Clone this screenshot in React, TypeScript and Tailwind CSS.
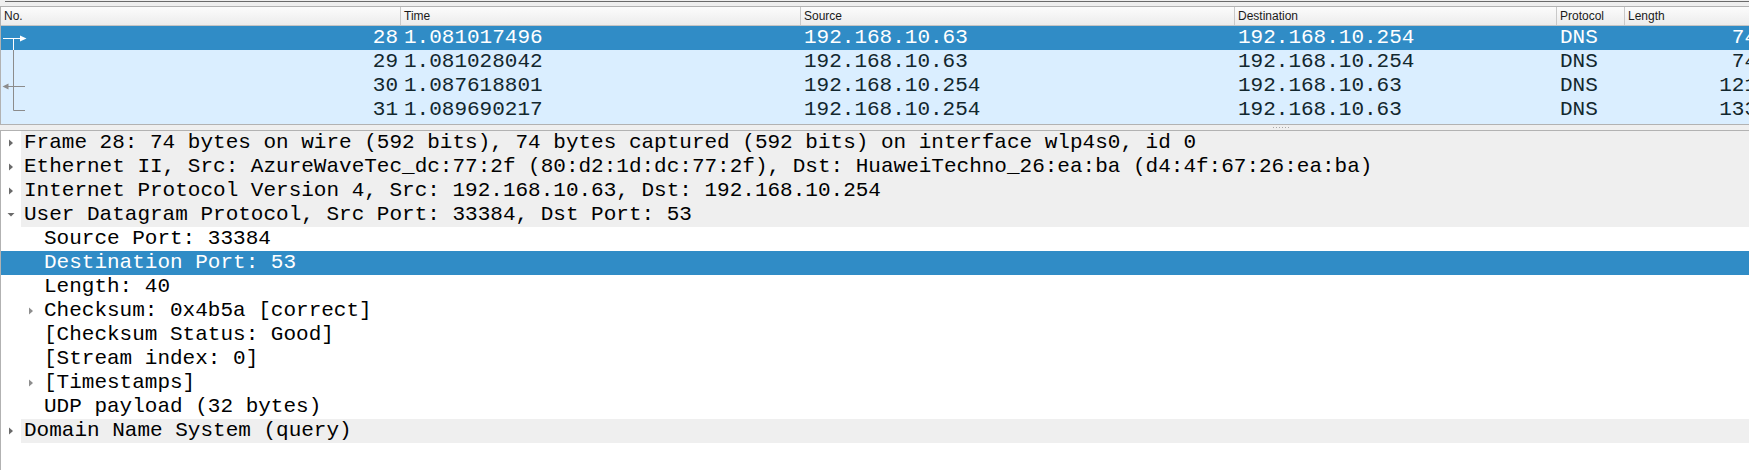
import React from "react";

const mono = { fontFamily: '"Liberation Mono", monospace' };

type Pkt = { no: string; time: string; src: string; dst: string; proto: string; len: string };

const packets: Pkt[] = [
  { no: "28", time: "1.081017496", src: "192.168.10.63", dst: "192.168.10.254", proto: "DNS", len: "74" },
  { no: "29", time: "1.081028042", src: "192.168.10.63", dst: "192.168.10.254", proto: "DNS", len: "74" },
  { no: "30", time: "1.087618801", src: "192.168.10.254", dst: "192.168.10.63", proto: "DNS", len: "121" },
  { no: "31", time: "1.089690217", src: "192.168.10.254", dst: "192.168.10.63", proto: "DNS", len: "133" },
];

function Related({ idx, selected }: { idx: number; selected: boolean }) {
  const c = selected ? "#ffffff" : "#8c8c8c";
  return (
    <svg width="30" height="24" className="absolute left-0 top-0" viewBox="0 0 30 24">
      {idx === 0 && (
        <>
          <line x1="2" y1="12.5" x2="20" y2="12.5" stroke={c} strokeWidth="1" />
          <polygon points="19,9.5 25.5,12.5 19,15.5" fill={c} />
          <line x1="12.5" y1="12.5" x2="12.5" y2="24" stroke={c} strokeWidth="1" />
        </>
      )}
      {idx === 1 && <line x1="12.5" y1="0" x2="12.5" y2="24" stroke={c} strokeWidth="1" />}
      {idx === 2 && (
        <>
          <line x1="12.5" y1="0" x2="12.5" y2="24" stroke={c} strokeWidth="1" />
          <line x1="7" y1="12.5" x2="24" y2="12.5" stroke={c} strokeWidth="1" />
          <polygon points="7.5,9.5 1.5,12.5 7.5,15.5" fill={c} />
        </>
      )}
      {idx === 3 && (
        <>
          <line x1="12.5" y1="0" x2="12.5" y2="12.5" stroke={c} strokeWidth="1" />
          <line x1="12.5" y1="12.5" x2="24" y2="12.5" stroke={c} strokeWidth="1" />
        </>
      )}
    </svg>
  );
}

function Arrow({ open, color }: { open?: boolean; color: string }) {
  return open ? (
    <svg width="8" height="6" viewBox="0 0 8 6">
      <polygon points="0.5,1 7.5,1 4,4.5" fill={color} />
    </svg>
  ) : (
    <svg width="6" height="8" viewBox="0 0 6 8">
      <polygon points="1,0.5 5,4 1,7.5" fill={color} />
    </svg>
  );
}

type Node = { text: string; level: 0 | 1; arrow?: "open" | "closed"; selected?: boolean };

const nodes: Node[] = [
  { text: "Frame 28: 74 bytes on wire (592 bits), 74 bytes captured (592 bits) on interface wlp4s0, id 0", level: 0, arrow: "closed" },
  { text: "Ethernet II, Src: AzureWaveTec_dc:77:2f (80:d2:1d:dc:77:2f), Dst: HuaweiTechno_26:ea:ba (d4:4f:67:26:ea:ba)", level: 0, arrow: "closed" },
  { text: "Internet Protocol Version 4, Src: 192.168.10.63, Dst: 192.168.10.254", level: 0, arrow: "closed" },
  { text: "User Datagram Protocol, Src Port: 33384, Dst Port: 53", level: 0, arrow: "open" },
  { text: "Source Port: 33384", level: 1 },
  { text: "Destination Port: 53", level: 1, selected: true },
  { text: "Length: 40", level: 1 },
  { text: "Checksum: 0x4b5a [correct]", level: 1, arrow: "closed" },
  { text: "[Checksum Status: Good]", level: 1 },
  { text: "[Stream index: 0]", level: 1 },
  { text: "[Timestamps]", level: 1, arrow: "closed" },
  { text: "UDP payload (32 bytes)", level: 1 },
  { text: "Domain Name System (query)", level: 0, arrow: "closed" },
];

export default function App() {
  const headerCell = "h-full flex items-center pl-[3px] border-r border-[#c9c9c9] shrink-0 overflow-hidden";
  return (
    <div
      className="w-[1749px] h-[470px] bg-[#efefef] overflow-hidden flex flex-col"
      style={{ fontFamily: '"Liberation Sans", sans-serif' }}
    >
      {/* top strip */}
      <div className="h-px shrink-0 bg-[#efefef]" />
      <div className="h-px shrink-0 ml-[5px] bg-[#6b6b6b]" />
      <div className="h-[4px] shrink-0" />

      {/* packet list */}
      <div className="shrink-0 border border-r-0 border-[#b2b2b2] bg-[#daeeff] h-[119px] flex flex-col overflow-hidden">
        <div className="h-[19px] shrink-0 flex border-b border-[#c4c4c4] bg-gradient-to-b from-[#fcfcfc] to-[#ececec] text-[12px] leading-[20px] text-[#1a1a1a]">
          <div className={headerCell + " w-[400px]"}>No.</div>
          <div className={headerCell + " w-[400px]"}>Time</div>
          <div className={headerCell + " w-[434px]"}>Source</div>
          <div className={headerCell + " w-[322px]"}>Destination</div>
          <div className={headerCell + " w-[68px]"}>Protocol</div>
          <div className={headerCell + " w-[200px]"}>Length</div>
        </div>
        {packets.map((p, i) => {
          const sel = i === 0;
          return (
            <div
              key={p.no}
              className={
                "h-[24px] shrink-0 flex items-center text-[21px] leading-[24px] whitespace-nowrap " +
                (sel ? "bg-[#308cc6] text-white" : "bg-[#daeeff] text-[#12272e]")
              }
              style={mono}
            >
              <div className="relative w-[400px] h-full shrink-0 text-right pr-[3px]">
                <Related idx={i} selected={sel} />
                {p.no}
              </div>
              <div className="w-[400px] shrink-0 pl-[3px]">{p.time}</div>
              <div className="w-[434px] shrink-0 pl-[3px]">{p.src}</div>
              <div className="w-[322px] shrink-0 pl-[3px]">{p.dst}</div>
              <div className="w-[68px] shrink-0 pl-[3px]">{p.proto}</div>
              <div className="w-[135px] shrink-0 text-right pr-[3px]">{p.len}</div>
            </div>
          );
        })}
      </div>

      {/* splitter */}
      <div className="h-[5px] shrink-0 flex items-center justify-start">
        <div className="ml-[1273px] flex gap-[2px]">
          {[0, 1, 2, 3, 4, 5].map((d) => (
            <div key={d} className="w-px h-px bg-[#a8a8a8]" />
          ))}
        </div>
      </div>

      {/* details */}
      <div className="flex-1 border-t border-l border-[#b2b2b2] bg-white overflow-hidden">
        {nodes.map((n, i) => {
          const indent = n.level === 0 ? 0 : 20;
          const arrowColor = n.level === 0 ? "#6a6a6a" : "#8e8e8e";
          return (
            <div
              key={i}
              className={
                "h-[24px] flex items-stretch whitespace-nowrap text-[21px] leading-[24px] " +
                (n.selected ? "bg-[#308cc6] text-white" : "text-black")
              }
              style={mono}
            >
              <div style={{ width: indent }} className="shrink-0" />
              <div className="w-[20px] shrink-0 flex items-center justify-center">
                {n.arrow && <Arrow open={n.arrow === "open"} color={arrowColor} />}
              </div>
              <div className={"flex-1 pl-[3px] " + (n.level === 0 ? "bg-[#efefef]" : "")}>{n.text}</div>
            </div>
          );
        })}
      </div>
    </div>
  );
}
